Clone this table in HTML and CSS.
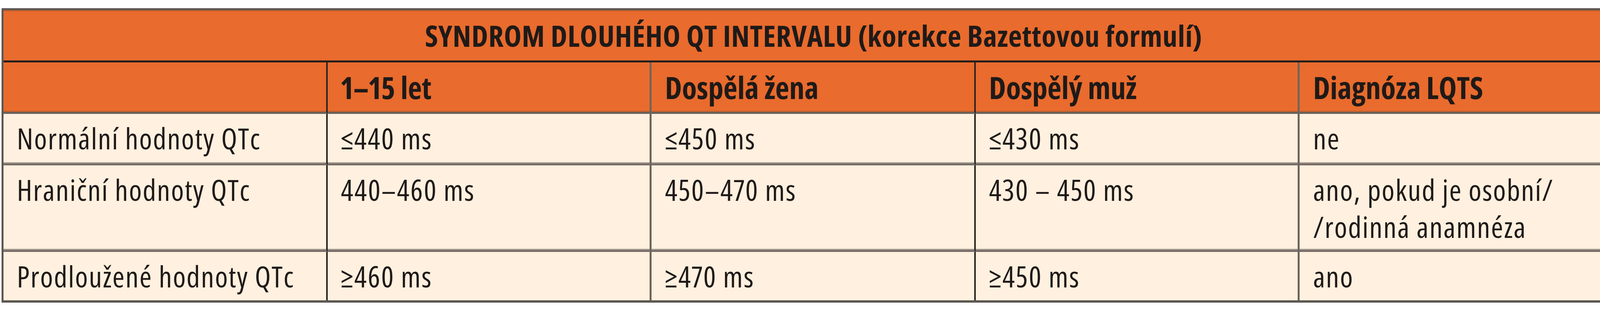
FILE: index.html
```html
<!DOCTYPE html>
<html lang="cs">
<head>
<meta charset="utf-8">
<title>Syndrom dlouhého QT intervalu</title>
<link rel="stylesheet" href="styles.css">
</head>
<body>
<table class="qt">
  <colgroup>
    <col class="c"><col class="c"><col class="c"><col class="c"><col class="c">
  </colgroup>
  <thead>
    <tr class="title-row">
      <th class="title" colspan="5">SYNDROM DLOUHÉHO QT INTERVALU (korekce Bazettovou formulí)</th>
    </tr>
    <tr class="head-row">
      <th class="h dark"></th>
      <th class="h gray">1–15 let</th>
      <th class="h dark">Dospělá žena</th>
      <th class="h gray">Dospělý muž</th>
      <th class="h">Diagnóza LQTS</th>
    </tr>
  </thead>
  <tbody>
    <tr class="r1">
      <td class="dark">Normální hodnoty QTc</td>
      <td class="gray">≤440 ms</td>
      <td class="dark">≤450 ms</td>
      <td class="gray">≤430 ms</td>
      <td>ne</td>
    </tr>
    <tr class="r2">
      <td class="dark">Hraniční hodnoty QTc</td>
      <td class="gray">440–460 ms</td>
      <td class="dark">450–470 ms</td>
      <td class="gray">430 – 450 ms</td>
      <td>ano, pokud je osobní/<br>/rodinná anamnéza</td>
    </tr>
    <tr class="r3">
      <td class="dark">Prodloužené hodnoty QTc</td>
      <td class="gray">≥460 ms</td>
      <td class="dark">≥470 ms</td>
      <td class="gray">≥450 ms</td>
      <td>ano</td>
    </tr>
  </tbody>
</table>
</body>
</html>
```
FILE: styles.css
```css
html, body {
  margin: 0;
  padding: 0;
  background: #ffffff;
}

body {
  padding: 21px 0 0 4px;
  font-family: "Open Sans", "Liberation Sans", sans-serif;
  color: #1f1a18;
}

.qt {
  width: 4158px;
  table-layout: fixed;
  border-collapse: separate;
  border-spacing: 0;
  border: 5px solid #5d5752;
  border-bottom-width: 6px;
  box-shadow: 0 3px 2px rgba(0, 0, 0, 0.12);
}

.qt .c {
  width: 20%;
}

.qt th,
.qt td {
  padding: 0 0 0 34px;
  text-align: left;
  white-space: nowrap;
  font-variant-numeric: proportional-nums;
}

.qt thead th {
  background: #e96b2d;
  font-weight: 700;
  font-stretch: 75%;
}

.title {
  height: 129px;
  text-align: center !important;
  padding-left: 0 !important;
  font-size: 76px;
  letter-spacing: 0.8px;
  vertical-align: middle;
  border-bottom: 5px solid #231f1c;
  box-shadow: inset 0 3px #bd5e30;
}

.h {
  height: 127px;
  font-size: 78px;
  vertical-align: middle;
  border-bottom: 5px solid #67605b;
  box-shadow: inset 0 -3px #c2602f;
}

.qt td {
  background: #fff0df;
  font-size: 75px;
  letter-spacing: 2.2px;
  font-weight: 400;
  font-stretch: 75%;
  line-height: 95px;
  vertical-align: top;
  padding-top: 15px;
}

.r1 td {
  height: 112px;
  border-bottom: 5px solid #776d66;
  box-shadow: inset 0 -3px #a69b91;
}

.r2 td {
  height: 202px;
  border-bottom: 5px solid #776d66;
  box-shadow: inset 0 -3px #a69b91;
}

.r3 td {
  height: 109px;
}

.dark {
  border-right: 4px solid #2a2421;
}

.gray {
  border-right: 5px solid #6e645d;
}
```
